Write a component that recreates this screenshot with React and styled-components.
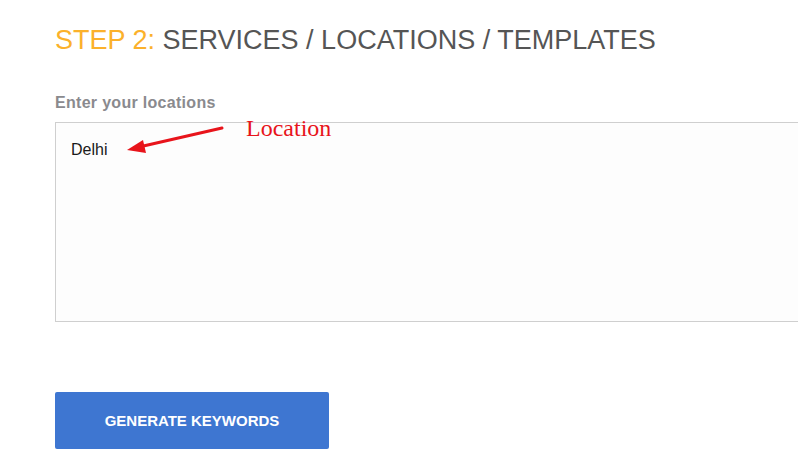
import React from 'react';
import styled, { createGlobalStyle } from 'styled-components';

const GlobalStyle = createGlobalStyle`
  html, body {
    margin: 0;
    padding: 0;
    background: #ffffff;
    overflow: hidden;
  }
  body {
    font-family: "Liberation Sans", Arial, sans-serif;
  }
`;

const Page = styled.div`
  width: 798px;
  height: 456px;
  padding: 25px 0 0 55px;
  box-sizing: border-box;
  overflow: hidden;
`;

const Title = styled.h2`
  margin: 0;
  font-size: 27px;
  font-weight: 400;
  color: #555555;
  line-height: 30px;
`;

const Step = styled.span`
  color: #fbb12b;
`;

const Label = styled.label`
  display: block;
  margin-top: 39px;
  font-size: 16px;
  font-weight: 700;
  letter-spacing: 0.3px;
  color: #8a8a8e;
`;

const Field = styled.div`
  position: relative;
  margin-top: 10px;
  width: 780px;
`;

const TextArea = styled.div`
  box-sizing: border-box;
  height: 200px;
  width: 100%;
  border: 1px solid #cfcfcf;
  border-right: none;
  background: #fdfdfd;
  padding: 18px 15px;
  font-size: 16px;
  color: #1a1a1a;
`;

const Note = styled.div`
  position: absolute;
  left: 0;
  top: 0;
  pointer-events: none;
`;

const NoteText = styled.span`
  position: absolute;
  left: 191px;
  top: -7px;
  font-family: "Liberation Serif", "Times New Roman", serif;
  font-size: 24px;
  color: #e8141b;
  white-space: nowrap;
`;

const Arrow = styled.svg`
  position: absolute;
  left: 60px;
  top: 0;
`;

const Button = styled.button`
  display: block;
  margin-top: 70px;
  width: 274px;
  height: 57px;
  border: none;
  border-radius: 2px;
  background: #3e76d1;
  color: #ffffff;
  font-family: "Liberation Sans", Arial, sans-serif;
  font-size: 15px;
  font-weight: 700;
  cursor: pointer;
`;

export default function App() {
  return (
    <>
      <GlobalStyle />
      <Page>
        <Title>
          <Step>STEP 2:</Step> SERVICES / LOCATIONS / TEMPLATES
        </Title>
        <Label>Enter your locations</Label>
        <Field>
          <TextArea>Delhi</TextArea>
          <Note>
            <Arrow width="120" height="40" viewBox="0 0 120 40">
              <line x1="107" y1="6" x2="24" y2="25" stroke="#e8141b" strokeWidth="3" strokeLinecap="round" />
              <polygon points="12,28 28,18 31,31" fill="#e8141b" />
            </Arrow>
            <NoteText>Location</NoteText>
          </Note>
        </Field>
        <Button>GENERATE KEYWORDS</Button>
      </Page>
    </>
  );
}
